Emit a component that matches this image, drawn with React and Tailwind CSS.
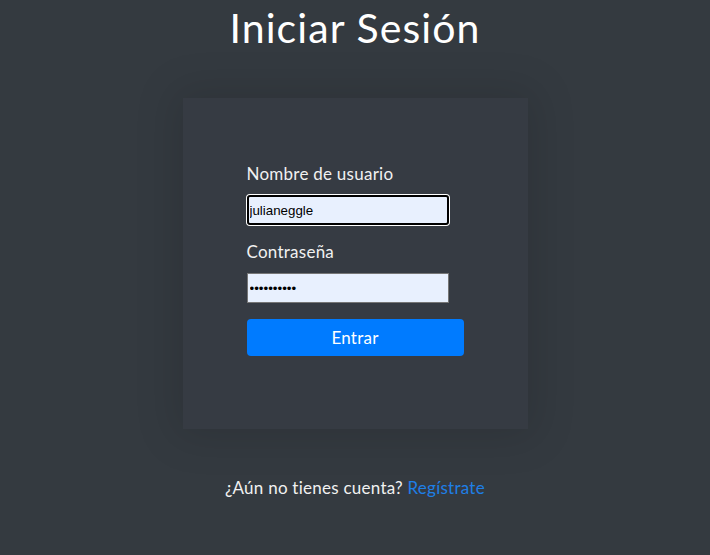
import { useState } from 'react';

export default function App() {
  const [user, setUser] = useState('julianeggle');
  const [pass, setPass] = useState('secreto123');

  return (
    <div className="min-h-screen w-full bg-[#343a40] flex flex-col items-center font-['Lato',sans-serif] text-[#f1f1f1]">
      <h1 className="mt-[4px] text-[41px] leading-[48px] font-normal text-white tracking-[1.1px]">
        Iniciar Sesión
      </h1>

      {/* Card */}
      <div className="mt-[46px] w-[345px] bg-[#363b43] shadow-[0_0_40px_8px_rgba(0,0,0,0.12)] pl-[64px] pr-[64px] pt-[64px] pb-[73px]">
        <form onSubmit={(e) => e.preventDefault()}>
          <label className="block text-[17px] leading-6 tracking-[0.25px]">Nombre de usuario</label>
          <input
            type="text"
            value={user}
            onChange={(e) => setUser(e.target.value)}
            className="mt-[9px] block w-[202px] h-[30px] px-[1px] bg-[#e8f0fe] border-2 border-black rounded-[3px] shadow-[0_0_0_1px_white] outline-none text-black font-['Liberation_Sans',Arial,sans-serif] text-[13.33px]"
          />

          <label className="mt-[15px] block text-[17px] leading-6 tracking-[0.25px]">Contraseña</label>
          <input
            type="password"
            value={pass}
            onChange={(e) => setPass(e.target.value)}
            className="mt-[9px] block w-[202px] h-[30px] px-[2px] bg-[#e8f0fe] border border-[#767676] outline-none text-black font-['Liberation_Sans',Arial,sans-serif] text-[13.33px]"
          />

          <button
            type="submit"
            className="mt-[16px] w-[217px] h-[37px] bg-[#007bff] rounded-[4px] text-white text-[17px] leading-6 tracking-[0.25px]"
          >
            Entrar
          </button>
        </form>
      </div>

      <p className="mt-[47px] text-[17px] leading-6 tracking-[0.25px]">
        ¿Aún no tienes cuenta? <a href="#" className="text-[#1e7fe6]">Regístrate</a>
      </p>
    </div>
  );
}
